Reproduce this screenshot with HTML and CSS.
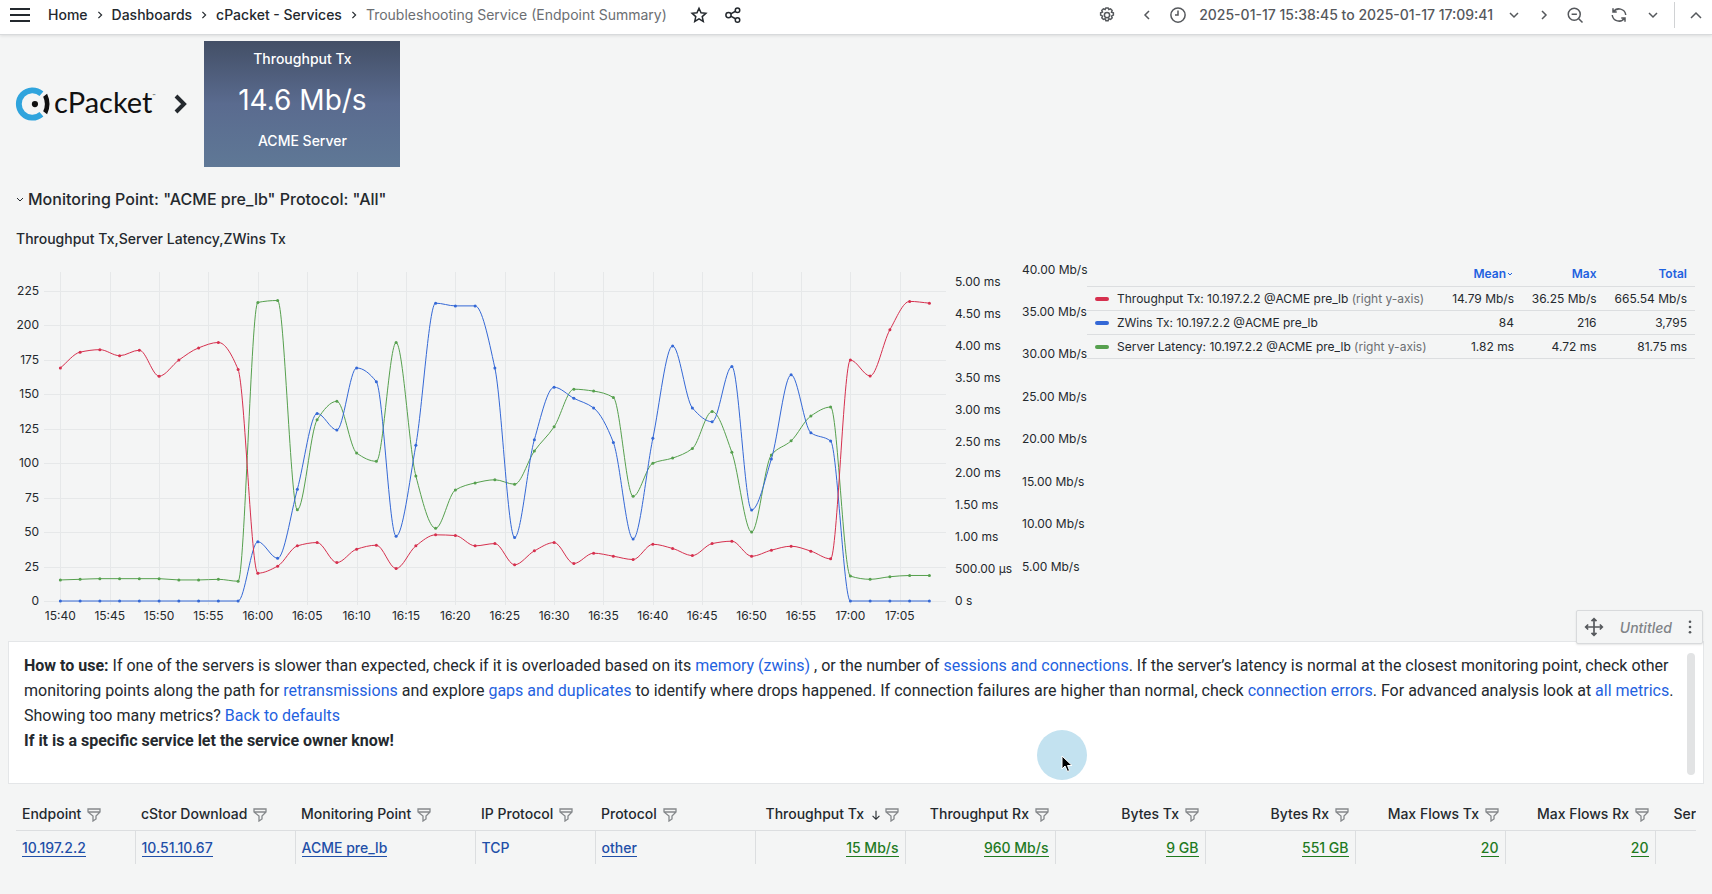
FILE: index.html
```
<!DOCTYPE html>
<html lang="en">
<head>
    <meta charset="UTF-8">
    <meta name="viewport" content="width=device-width, initial-scale=1.0">
    <title>Troubleshooting Service (Endpoint Summary)</title>
    <link rel="stylesheet" href="styles.css">
</head>
<body>
    <header class="topbar">
        <button class="icon-btn" aria-label="Menu">
            <svg class="menu-icon" viewBox="0 0 20 16"><path d="M0 2h20M0 8h20M0 14h20"/></svg>
        </button>
        <nav class="crumbs">
            <a href="#">Home</a>
            <svg class="sep" viewBox="0 0 6 10"><path d="M1 1l4 4-4 4"/></svg>
            <a href="#">Dashboards</a>
            <svg class="sep" viewBox="0 0 6 10"><path d="M1 1l4 4-4 4"/></svg>
            <a href="#">cPacket - Services</a>
            <svg class="sep" viewBox="0 0 6 10"><path d="M1 1l4 4-4 4"/></svg>
            <span class="current">Troubleshooting Service (Endpoint Summary)</span>
        </nav>
        <button class="icon-btn star" aria-label="Star">
            <svg viewBox="0 0 24 24"><path d="M12 3l2.700 6 6.500.7-4.900 4.400 1.400 6.500L12 17.300l-5.700 3.300 1.400-6.500L2.800 9.700l6.500-.7z"/></svg>
        </button>
        <button class="icon-btn share" aria-label="Share">
            <svg viewBox="0 0 24 24"><circle cx="6" cy="12" r="3.500"/><circle cx="18" cy="5.500" r="3"/><circle cx="18" cy="18.500" r="3"/><path d="M9 10.500l6.300-3.500M9 13.500l6.300 3.500"/></svg>
        </button>
        <div class="tools">
            <button class="icon-btn" aria-label="Settings">
                <svg viewBox="0 0 24 24"><circle cx="12" cy="12" r="3.500"/><path d="M9.500 4.600L10.500 2.500h3l1 2.100 2.200-.8 2.100 2.100-.8 2.300 2.500.8v3.200l-2.500 1.200.9 2.300-2.100 2.200-2.300-.9-1 2.500h-3l-1-2.500-2.300.9-2.100-2.200.9-2.300-2.500-1.200V9l2.500-.8-.9-2.300 2.100-2.100z"/></svg>
            </button>
            <button class="icon-btn prev" aria-label="Move time range backwards">
                <svg class="small" viewBox="0 0 12 12"><path d="M8 2L4 6l4 4"/></svg>
            </button>
            <button class="range">
                <svg viewBox="0 0 24 24"><circle cx="12" cy="12" r="9.500"/><path d="M12 6v6H8"/></svg>
                2025-01-17 15:38:45 to 2025-01-17 17:09:41
                <svg class="small" viewBox="0 0 12 12"><path d="M2 4l4 4 4-4"/></svg>
            </button>
            <button class="icon-btn next" aria-label="Move time range forwards">
                <svg class="small" viewBox="0 0 12 12"><path d="M4 2l4 4-4 4"/></svg>
            </button>
            <button class="icon-btn zoom-out" aria-label="Zoom out">
                <svg viewBox="0 0 24 24"><circle cx="11" cy="11" r="8"/><path d="M17 17l5 5M7.500 11h7"/></svg>
            </button>
            <button class="icon-btn refresh" aria-label="Refresh">
                <svg viewBox="0 0 24 24"><path d="M4 3v5h5M4.500 8A9 9 0 0 1 21 12M20 21v-5h-5M19.500 16A9 9 0 0 1 3 12"/></svg>
            </button>
            <button class="icon-btn" aria-label="Refresh interval">
                <svg class="small" viewBox="0 0 12 12"><path d="M2 4l4 4 4-4"/></svg>
            </button>
            <button class="icon-btn collapse" aria-label="Hide controls">
                <svg class="small" viewBox="0 0 12 12"><path d="M1 9l5-5 5 5"/></svg>
            </button>
        </div>
    </header>

    <main>
        <section class="intro">
            <div class="logo">
                <svg class="logo-mark" viewBox="0 0 36 36">
                    <path class="ring" d="M27.200 7A14 14 0 1 0 27.200 28"/>
                    <circle cx="20.500" cy="17.500" r="3.200"/>
                    <path class="bar" d="M29 10l4-3q5 10.500 0 21l-4-3q3.500-7.500 0-15z"/>
                </svg>
                <span class="logo-name">cPacket<sup>™</sup></span>
            </div>
            <svg class="logo-arrow" viewBox="0 0 14 22"><path d="M3 3l8 8-8 8"/></svg>
            <div class="stat">
                <span>Throughput Tx</span>
                <span class="stat-value">14.6 Mb/s</span>
                <span>ACME Server</span>
            </div>
        </section>

        <button class="row-title">
            <svg class="small" viewBox="0 0 12 12"><path d="M3 5l3 3 3-3"/></svg>
            Monitoring Point: "ACME pre_lb" Protocol: "All"
        </button>

        <section class="panel">
            <h2>Throughput Tx,Server Latency,ZWins Tx</h2>
            <div class="panel-body">
                <svg class="chart" id="chart"></svg>
                <table class="legend">
                    <thead>
                        <tr>
                            <th></th>
                            <th>Mean<svg viewBox="0 0 8 8"><path d="M2 3l2 2 2-2"/></svg></th>
                            <th>Max</th>
                            <th>Total</th>
                        </tr>
                    </thead>
                    <tbody>
                        <tr>
                            <td><i class="swatch red"></i>Throughput Tx: 10.197.2.2 @ACME pre_lb <small>(right y-axis)</small></td>
                            <td>14.79 Mb/s</td>
                            <td>36.25 Mb/s</td>
                            <td>665.54 Mb/s</td>
                        </tr>
                        <tr>
                            <td><i class="swatch blue"></i>ZWins Tx: 10.197.2.2 @ACME pre_lb</td>
                            <td>84</td>
                            <td>216</td>
                            <td>3,795</td>
                        </tr>
                        <tr>
                            <td><i class="swatch green"></i>Server Latency: 10.197.2.2 @ACME pre_lb <small>(right y-axis)</small></td>
                            <td>1.82 ms</td>
                            <td>4.72 ms</td>
                            <td>81.75 ms</td>
                        </tr>
                    </tbody>
                </table>
            </div>
        </section>

        <section class="help">
            <div class="help-menu">
                <svg viewBox="0 0 24 24"><path d="M12 2v20M2 12h20M9 5l3-3 3 3M9 19l3 3 3-3M5 9l-3 3 3 3M19 9l3 3-3 3"/></svg>
                <em>Untitled</em>
                <button class="dots" aria-label="Panel menu"><svg viewBox="0 0 4 16"><circle cx="2" cy="2" r="1.500"/><circle cx="2" cy="8" r="1.500"/><circle cx="2" cy="14" r="1.500"/></svg></button>
            </div>
            <div class="help-text">
                <p><b>How to use:</b> If one of the servers is slower than expected, check if it is overloaded based on its <a href="#">memory (zwins)</a> , or the number of <a href="#">sessions and connections</a>. If the server’s latency is normal at the closest monitoring point, check other monitoring points along the path for <a href="#">retransmissions</a> and explore <a href="#">gaps and duplicates</a> to identify where drops happened. If connection failures are higher than normal, check <a href="#">connection errors</a>. For advanced analysis look at <a href="#">all metrics</a>.</p>
                <p>Showing too many metrics? <a href="#">Back to defaults</a></p>
                <p><b>If it is a specific service let the service owner know!</b></p>
            </div>
            <div class="scrollbar"></div>
            <div class="pointer">
                <svg viewBox="0 0 12 18"><path d="M1 1v13l3-3 2.500 5.500 2-1L6.500 10.500H11z"/></svg>
            </div>
        </section>

        <section class="endpoints">
            <table>
                <colgroup>
                    <col class="w119"><col class="w160"><col class="w180"><col class="w120"><col class="w160">
                    <col class="w150"><col class="w150"><col class="w150"><col class="w150"><col class="w150"><col class="w150"><col>
                </colgroup>
                <thead>
                    <tr id="heads"></tr>
                </thead>
                <tbody>
                    <tr>
                        <td><a href="#">10.197.2.2</a></td>
                        <td><a href="#">10.51.10.67</a></td>
                        <td><a href="#">ACME pre_lb</a></td>
                        <td>TCP</td>
                        <td><a href="#">other</a></td>
                        <td class="num"><a href="#">15 Mb/s</a></td>
                        <td class="num"><a href="#">960 Mb/s</a></td>
                        <td class="num"><a href="#">9 GB</a></td>
                        <td class="num"><a href="#">551 GB</a></td>
                        <td class="num"><a href="#">20</a></td>
                        <td class="num"><a href="#">20</a></td>
                        <td class="num"></td>
                    </tr>
                </tbody>
            </table>
        </section>
    </main>
    <script src="script.js"></script>
</body>
</html>
```
FILE: styles.css
```
* {
    box-sizing: border-box;
}
body {
    margin: 0;
    min-height: 100vh;
    font-family: Inter, "Liberation Sans", sans-serif;
    font-size: 14px;
    color: #24292e;
    background: #f4f5f5;
    overflow-x: hidden;
}
a {
    color: inherit;
    text-decoration: none;
}
button {
    font: inherit;
    color: inherit;
    background: none;
    border: none;
    padding: 0;
    cursor: pointer;
}
svg {
    fill: none;
    stroke: currentColor;
    stroke-width: 2;
    flex: none;
}

/* top bar */
.topbar {
    display: flex;
    align-items: center;
    height: 35px;
    padding: 0 10px 5px;
    background: #fff;
    border-bottom: 1px solid #d8dadc;
    box-shadow: 0 1px 3px rgba(0, 0, 0, 0.1);
}
.icon-btn {
    display: flex;
}
.icon-btn svg, .range svg {
    width: 18px;
    height: 18px;
}
.icon-btn .menu-icon {
    width: 20px;
    height: 16px;
}
.icon-btn .small, .range .small {
    width: 12px;
    height: 12px;
    stroke-width: 1.5;
}
.crumbs {
    display: flex;
    align-items: center;
    gap: 9px;
    margin-left: 18px;
    font-weight: 500;
}
.crumbs .sep {
    width: 6px;
    height: 8px;
    stroke-width: 1.5;
}
.current {
    color: #6b6e72;
    font-weight: 400;
}
.star {
    margin-left: 23px;
}
.share {
    margin-left: 16px;
}
.tools {
    display: flex;
    align-items: center;
    margin-left: auto;
    color: #55585c;
}
.prev {
    margin: 0 16px 0 25px;
}
.range {
    display: flex;
    align-items: center;
    gap: 12px;
    font-weight: 500;
}
.range .small {
    margin-left: 3px;
}
.next {
    margin-left: 18px;
}
.zoom-out {
    margin-left: 16px;
}
.refresh {
    margin: 0 19px 0 26px;
}
.collapse {
    height: 26px;
    align-items: center;
    margin-left: 15px;
    padding-left: 15px;
    border-left: 1px solid #d0d2d4;
}

/* logo and stat */
main {
    padding: 6px 8px 0;
}
.intro {
    display: flex;
    align-items: center;
    padding-left: 7px;
}
.logo {
    display: flex;
    align-items: center;
    gap: 4px;
    color: #111;
}
.logo-mark {
    width: 35px;
    height: 35px;
}
.logo-mark circle, .logo-mark .bar {
    fill: #111;
    stroke: none;
}
.logo-mark .ring {
    stroke: #2fa4dd;
    stroke-width: 6;
}
.logo-name {
    padding-bottom: 5px;
    font-family: Lato, sans-serif;
    font-size: 29px;
    line-height: 32px;
}
.logo-name sup {
    font-size: 4px;
    line-height: 4px;
    vertical-align: 16px;
}
.logo-arrow {
    width: 14px;
    height: 22px;
    margin: 0 17px 0 18px;
    stroke-width: 4;
}
.stat {
    display: flex;
    flex-direction: column;
    align-items: center;
    justify-content: space-between;
    width: 196px;
    height: 126px;
    padding: 9px 0 18px;
    font-weight: 500;
    color: #fff;
    background: linear-gradient(#434f66, #5a6b8f 50%, #5f7896);
}
.stat-value {
    font-size: 28px;
    font-weight: 400;
}

/* chart panel */
.row-title {
    display: flex;
    align-items: center;
    gap: 2px;
    margin: 21px 0 0 6px;
    font-size: 16px;
    line-height: 22px;
    font-weight: 500;
}
.row-title .small {
    width: 12px;
    height: 12px;
    stroke-width: 1;
}
.panel {
    padding: 19px 9px 0 8px;
}
.panel h2 {
    margin: 0;
    font-size: 14px;
    line-height: 20px;
    font-weight: 500;
}
.panel-body {
    display: flex;
    align-items: flex-start;
    padding-top: 4px;
}
.chart {
    flex: 1;
    min-width: 0;
    height: 388px;
    font-size: 12px;
    overflow: visible;
}
.chart text {
    fill: #24292e;
    stroke: none;
}
.chart .grid {
    stroke: #e6e8e9;
    stroke-width: 1;
}
.chart .line {
    stroke-width: 1;
}
.chart circle {
    stroke: none;
}
.legend {
    width: 608px;
    margin-top: 9px;
    border-collapse: collapse;
    font-size: 12px;
    white-space: nowrap;
}
.legend tr {
    height: 24px;
    border-bottom: 1px solid #dcdee0;
}
.legend th, .legend td {
    padding: 0 8px;
    text-align: right;
}
.legend td:first-child {
    text-align: left;
}
.legend th {
    color: #1f62e0;
    font-weight: 600;
}
.legend th svg {
    width: 8px;
    height: 8px;
    stroke-width: 1;
}
.legend small {
    font-size: 12px;
    color: #6b6e72;
}
.swatch {
    display: inline-block;
    width: 14px;
    height: 4px;
    margin-right: 8px;
    border-radius: 2px;
    vertical-align: middle;
}
.red {
    background: #d6304e;
}
.blue {
    background: #3468d6;
}
.green {
    background: #56a04e;
}

/* help panel */
.help {
    position: relative;
    display: flex;
    height: 143px;
    padding: 11px 8px 8px 15px;
    background: #fff;
    border: 1px solid #e4e6e8;
}
.help-text {
    flex: 1;
    font-family: Roboto, sans-serif;
    font-size: 16px;
    line-height: 25px;
}
.help-text p {
    margin: 0;
}
.help-text a {
    color: #1f62e0;
}
.scrollbar {
    width: 8px;
    border-radius: 4px;
    background: #e2e3e4;
}
.help-menu {
    position: absolute;
    right: 0;
    top: -32px;
    display: flex;
    align-items: center;
    gap: 16px;
    height: 34px;
    padding: 0 10px 0 7px;
    font-weight: 500;
    color: #808387;
    background: #f4f5f5;
    border: 1px solid #d8dadc;
    border-radius: 2px;
    box-shadow: 0 1px 2px rgba(0, 0, 0, 0.1);
}
.help-menu svg {
    width: 20px;
    height: 20px;
    color: #55585c;
}
.help-menu .dots svg {
    display: block;
    width: 4px;
    height: 14px;
    fill: currentColor;
    stroke: none;
}
.pointer {
    position: absolute;
    left: 60.7%;
    top: 88px;
    display: flex;
    width: 50px;
    height: 50px;
    padding: 25px 0 0 24px;
    border-radius: 50%;
    background: #c3e2f0;
}
.pointer svg {
    width: 12px;
    height: 18px;
    fill: #000;
    stroke: #fff;
    stroke-width: 1;
}

/* endpoints table */
.endpoints {
    margin: 13px 8px 0;
    overflow: hidden;
}
.endpoints table {
    table-layout: fixed;
    width: 1785px;
    border-collapse: collapse;
    white-space: nowrap;
}
.w119 {
    width: 119px;
}
.w120 {
    width: 120px;
}
.w150 {
    width: 150px;
}
.w160 {
    width: 160px;
}
.w180 {
    width: 180px;
}
.endpoints th, .endpoints td {
    height: 34px;
    padding: 0 6px;
    font-weight: 500;
    text-align: left;
}
.endpoints th {
    height: 33px;
    border-bottom: 1px solid #dcdee0;
}
.endpoints td {
    color: #1f4fa8;
    border-right: 1px solid #dcdee0;
}
.endpoints td a {
    border-bottom: 1px solid currentColor;
}
.endpoints .num {
    text-align: right;
}
.endpoints td.num {
    color: #1f7a1f;
}
.endpoints svg {
    width: 14px;
    height: 14px;
    margin-left: 6px;
    color: #85888b;
    stroke-width: 1.3;
    vertical-align: -3px;
}
.endpoints .sorted {
    width: 12px;
    margin-right: -3px;
    color: #24292e;
}
```
FILE: script.js
```
// one sample every two minutes from 15:40
const throughput = [28.41, 30.27, 30.56, 29.85, 30.5, 27.44, 29.33, 30.77, 31.41, 28.22, 4.22, 5.05, 7.44, 7.83, 5.47, 7.05, 7.52, 4.77, 7.44, 8.74, 8.66, 7.44, 7.71, 5.21, 6.85, 7.83, 5.36, 6.58, 6.22, 5.83, 7.63, 7.13, 6.3, 7.71, 7.99, 6.22, 6.93, 7.4, 6.82, 5.91, 29.33, 27.47, 32.9, 36.25, 36.04];
const zwins = [0, 0, 0, 0, 0, 0, 0, 0, 0, 0, 43, 31, 81, 136, 124, 169, 159, 47, 113, 216, 214, 214, 169, 46, 117, 155, 147, 140, 115, 45, 118, 185, 140, 130, 170, 66, 103, 164, 122, 116, 0, 0, 0, 0, 0];
const latency = [0.33, 0.34, 0.35, 0.35, 0.35, 0.35, 0.33, 0.33, 0.34, 0.31, 4.68, 4.71, 1.43, 2.84, 3.13, 2.32, 2.19, 4.05, 1.96, 1.14, 1.74, 1.85, 1.9, 1.83, 2.35, 2.73, 3.32, 3.29, 3.19, 1.64, 2.16, 2.24, 2.39, 2.97, 2.33, 1.08, 2.29, 2.51, 2.9, 3.04, 0.39, 0.34, 0.38, 0.4, 0.4];

const chart = document.getElementById('chart');
const TOP = 19, BOTTOM = 348;

function add(tag, attrs, text) {
    const el = document.createElementNS('http://www.w3.org/2000/svg', tag);
    for (const key in attrs) el.setAttribute(key, attrs[key]);
    if (text) el.textContent = text;
    chart.appendChild(el);
}

// monotone cubic spline through evenly spaced points
function spline(pts) {
    const n = pts.length;
    const step = pts[1][0] - pts[0][0];
    const slopes = [];
    for (let i = 0; i < n - 1; i++) slopes.push((pts[i + 1][1] - pts[i][1]) / step);
    const m = [slopes[0]];
    for (let i = 1; i < n - 1; i++) {
        const a = slopes[i - 1], b = slopes[i];
        m.push(a * b <= 0 ? 0 : 2 * a * b / (a + b));
    }
    m.push(slopes[n - 2]);
    let d = `M${pts[0][0]} ${pts[0][1]}`;
    for (let i = 0; i < n - 1; i++) {
        const [x0, y0] = pts[i], [x1, y1] = pts[i + 1];
        d += `C${x0 + step / 3} ${y0 + m[i] * step / 3} ${x1 - step / 3} ${y1 - m[i + 1] * step / 3} ${x1} ${y1}`;
    }
    return d;
}

function draw() {
    chart.innerHTML = '';
    const width = chart.clientWidth;
    const left = 32, right = width - 141;
    const px = (right - left) / (90 + 56 / 60);
    const x = min => left + (min + 1.25) * px;

    for (let v = 0; v <= 225; v += 25) {
        const y = BOTTOM - v * 1.379;
        add('line', { class: 'grid', x1: left - 4, x2: right, y1: Math.round(y) + 0.5, y2: Math.round(y) + 0.5 });
        add('text', { x: left - 9, y: y + 4, 'text-anchor': 'end' }, String(v));
    }
    for (let min = 0; min <= 85; min += 5) {
        const h = 15 + Math.floor((40 + min) / 60);
        const label = h + ':' + String((40 + min) % 60).padStart(2, '0');
        add('line', { class: 'grid', x1: Math.round(x(min)) + 0.5, x2: Math.round(x(min)) + 0.5, y1: TOP, y2: BOTTOM + 4 });
        add('text', { x: x(min), y: BOTTOM + 19, 'text-anchor': 'middle' }, label);
    }
    for (let i = 0; i <= 10; i++) {
        const label = i === 0 ? '0 s' : i === 1 ? '500.00 µs' : (i / 2).toFixed(2) + ' ms';
        add('text', { x: right + 9, y: BOTTOM + 4 - i * 31.9 }, label);
    }
    for (let v = 5; v <= 40; v += 5) {
        add('text', { x: right + 76, y: BOTTOM + 12 - v * 8.486 }, v.toFixed(2) + ' Mb/s');
    }

    const series = [
        [latency, '#56a04e', v => BOTTOM - v * 63.8],
        [zwins, '#3468d6', v => BOTTOM - v * 1.379],
        [throughput, '#d6304e', v => BOTTOM + 8 - v * 8.486]
    ];
    for (const [data, color, y] of series) {
        const pts = data.map((v, i) => [x(i * 2), y(v)]);
        add('path', { class: 'line', d: spline(pts), stroke: color });
        pts.forEach(p => add('circle', { cx: p[0], cy: p[1], r: 1.5, fill: color }));
    }
}

const heads = ['Endpoint', 'cStor Download', 'Monitoring Point', 'IP Protocol', 'Protocol', 'Throughput Tx', 'Throughput Rx', 'Bytes Tx', 'Bytes Rx', 'Max Flows Tx', 'Max Flows Rx', 'Server Latency'];
const filter = '<svg viewBox="0 0 14 14"><path d="M1 1h12v3L9 8v3l-3 2V8L1 4zM1 4h12"/></svg>';
const arrow = '<svg class="sorted" viewBox="0 0 14 14"><path d="M7 2v10M3 8l4 4 4-4"/></svg>';
document.getElementById('heads').innerHTML = heads.map((name, i) =>
    `<th class="${i > 4 ? 'num' : ''}">${name}${i === 5 ? arrow : ''}${filter}</th>`).join('');

draw();
window.addEventListener('resize', draw);
```
